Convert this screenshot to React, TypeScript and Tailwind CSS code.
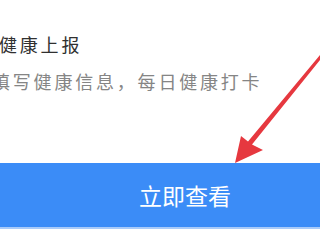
export default function App() {
  return (
    <div
      className="relative w-[320px] h-[240px] overflow-hidden bg-white"
      style={{ fontFamily: '"Noto Sans CJK SC", "Noto Sans", sans-serif' }}
    >
      <div className="pt-[32px]">
        <div className="-ml-[1px] text-[18px] leading-[24px] tracking-[2.8px] text-[#303030] whitespace-nowrap">
          健康上报
        </div>
        <div className="mt-[13px] -ml-[8px] text-[18px] leading-[24px] tracking-[2.8px] text-[#858585] whitespace-nowrap">
          填写健康信息，每日健康打卡
        </div>
      </div>
      <div className="mt-[70px] h-[66px] bg-[#3b8cf7] border-b-2 border-[#a9cbfa] flex items-center pl-[139px]">
        <span className="text-[23px] tracking-[0px] text-white leading-none">立即查看</span>
      </div>
      <svg className="absolute inset-0" width="320" height="240" viewBox="0 0 320 240">
        <polygon
          points="235,163 241,136 248,141.4 320.8,54 323.2,56 252,144.6 263,150"
          fill="#e6383f"
        />
      </svg>
    </div>
  )
}
